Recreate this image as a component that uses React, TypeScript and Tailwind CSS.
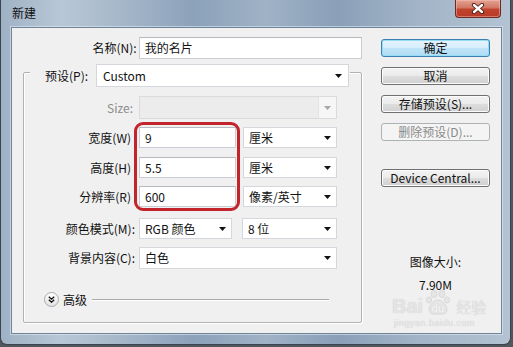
import React from "react";

function Arrow({ disabled }: { disabled?: boolean }) {
  return (
    <svg width="7" height="4" viewBox="0 0 7 4" className="shrink-0">
      <path d="M0 0H7L3.5 4Z" fill={disabled ? "#a8a8a8" : "#111"} />
    </svg>
  );
}

function Select({ className = "", text }: { className?: string; text: string }) {
  return (
    <div
      className={`flex items-center justify-between bg-white border border-[#d4d7db] pl-[5px] pr-[5px] ${className}`}
    >
      <span className="whitespace-nowrap">{text}</span>
      <Arrow />
    </div>
  );
}

function Input({ className = "", text }: { className?: string; text: string }) {
  return (
    <div
      className={`flex items-center bg-white border border-[#c9ced4] border-t-[#b5bac1] pl-[5px] ${className}`}
    >
      <span className="whitespace-nowrap">{text}</span>
    </div>
  );
}

function Label({ children, className = "" }: { children: React.ReactNode; className?: string }) {
  return (
    <div className={`w-[111px] shrink-0 flex justify-end whitespace-nowrap ${className}`}>{children}</div>
  );
}

function Btn({
  children,
  kind = "normal",
  className = "",
}: {
  children: React.ReactNode;
  kind?: "normal" | "default" | "disabled";
  className?: string;
}) {
  const styles = {
    normal:
      "border-[#707070] bg-[linear-gradient(#f3f3f3_0%,#ebebeb_48%,#dddddd_52%,#d0d0d0_100%)] text-[#111] shadow-[inset_0_0_0_1px_#fcfcfc]",
    default:
      "border-[#3c7fb1] bg-[linear-gradient(#e6f4fc_0%,#d6eefb_48%,#bfe4f8_52%,#b0dcf5_100%)] text-[#111] shadow-[inset_0_0_0_1px_#97dcf7]",
    disabled: "border-[#adb2b5] bg-[#f4f4f4] text-[#8a8a8a]",
  }[kind];
  return (
    <div
      className={`h-[18px] w-[109px] flex items-center justify-center rounded-[3px] border whitespace-nowrap ${styles} ${className}`}
    >
      {children}
    </div>
  );
}

export default function App() {
  return (
    <div className="w-[513px] h-[347px] bg-[#52575d] overflow-hidden font-['Noto_Sans_CJK_SC','Noto_Sans',sans-serif] text-[12px] leading-none text-[#111]">
      <div className="relative w-[511px] h-[345px] rounded-b-[7px] border border-t-0 border-[#3b4550] bg-[linear-gradient(90deg,#9fb2c5_0%,#b8c7d6_12%,#a3b5c8_25%,#8ca2ba_38%,#9fb2c6_52%,#8aa0b8_66%,#a2b4c7_82%,#b3c3d3_100%)] flex flex-col pl-[10px] pr-[8px]">
        {/* title bar */}
        <div className="h-[27px] shrink-0 flex items-start justify-between">
          <span className="mt-[7px] ml-[1px] text-[12px] text-[#111]">新建</span>
          <div className="w-[46px] h-[18px] mr-[1px] rounded-b-[4px] border border-t-0 border-[#6b2b22] bg-[linear-gradient(#e2a293_0%,#d27864_45%,#c0432c_55%,#b8392a_100%)] shadow-[inset_0_0_0_1px_rgba(255,200,190,0.45)] flex items-center justify-center">
            <svg width="14" height="11" viewBox="0 0 14 11">
              <path d="M3 2L11 9M11 2L3 9" stroke="#4a1a14" strokeWidth="4.2" strokeLinecap="round" />
              <path d="M3 2L11 9M11 2L3 9" stroke="#fff" strokeWidth="2.4" strokeLinecap="round" />
            </svg>
          </div>
        </div>

        {/* client area */}
        <div className="relative h-[307px] shrink-0 border border-[#6f8399] bg-[#f0f0f0] flex shadow-[0_0_0_1px_rgba(230,238,246,0.55)]">
          {/* left column */}
          <div className="w-[350px] shrink-0 flex flex-col">
            {/* name row */}
            <div className="mt-[9px] h-[22px] flex items-center">
              <div className="w-[125px] flex justify-end">名称(N):</div>
              <Input className="ml-[2px] w-[224px] h-[22px]" text="我的名片" />
            </div>

            {/* group box */}
            <div className="mt-[13px] ml-[11px] w-[339px] h-[251px] rounded-[2px] border border-[#b2b2b2] shadow-[inset_1px_1px_0_#fff,1px_1px_0_#fff] flex flex-col">
              {/* preset row on the border */}
              <div className="-mt-[9px] ml-[6px] w-[320px] h-[23px] bg-[#f0f0f0] flex items-center pl-[15px] pr-[1px]">
                <span>预设(P):</span>
                <Select className="ml-auto w-[253px] h-[23px] pl-[6px] pr-[6px]" text="Custom" />
              </div>

              {/* size */}
              <div className="mt-[9px] h-[23px] flex items-center">
                <Label className="text-[#8c8c8c] pr-[2px]">Size:</Label>
                <div className="ml-[4px] w-[198px] h-[23px] flex border border-[#d9dbde] bg-[#ececec]">
                  <div className="flex-1" />
                  <div className="w-[18px] flex items-center justify-center bg-[#f6f6f6] border-l border-[#e4e4e4]">
                    <Arrow disabled />
                  </div>
                </div>
              </div>

              {/* width */}
              <div className="mt-[8px] h-[21px] flex items-center">
                <Label className="pr-[4px]">宽度(W)</Label>
                <Input className="ml-[4px] w-[97px] h-[21px]" text="9" />
                <Select className="ml-[7px] w-[94px] h-[21px]" text="厘米" />
              </div>

              {/* height */}
              <div className="mt-[9px] h-[21px] flex items-center">
                <Label className="pr-[4px]">高度(H)</Label>
                <Input className="ml-[4px] w-[97px] h-[21px]" text="5.5" />
                <Select className="ml-[7px] w-[94px] h-[21px]" text="厘米" />
              </div>

              {/* resolution */}
              <div className="mt-[8px] h-[21px] flex items-center">
                <Label className="pr-[4px]">分辨率(R)</Label>
                <Input className="ml-[4px] w-[97px] h-[21px] border-[#7fa3c8] border-t-[#6b8fb8]" text="600" />
                <Select className="ml-[7px] w-[94px] h-[21px]" text="像素/英寸" />
              </div>

              {/* color mode */}
              <div className="mt-[11px] h-[21px] flex items-center">
                <Label>颜色模式(M):</Label>
                <Select className="ml-[4px] w-[93px] h-[21px]" text="RGB 颜色" />
                <Select className="ml-[10px] w-[95px] h-[21px]" text="8 位" />
              </div>

              {/* background */}
              <div className="mt-[8px] h-[22px] flex items-center">
                <Label>背景内容(C):</Label>
                <Select className="ml-[4px] w-[198px] h-[22px]" text="白色" />
              </div>

              {/* advanced */}
              <div className="mt-[23px] h-[15px] flex items-center pl-[20px] pr-[32px]">
                <div className="w-[15px] h-[15px] rounded-full border border-[#a9a9a9] bg-[linear-gradient(#ffffff,#e3e3e3)] flex items-center justify-center shrink-0">
                  <svg width="7" height="7" viewBox="0 0 7 7">
                    <path d="M0.8 0.8L3.5 3.2L6.2 0.8M0.8 3.8L3.5 6.2L6.2 3.8" stroke="#111" strokeWidth="1.3" fill="none" />
                  </svg>
                </div>
                <span className="ml-[4px]">高级</span>
                <div className="ml-[5px] flex-1 h-[2px] border-t border-[#a8a8a8] border-b border-b-[#ffffff]" />
              </div>
            </div>
          </div>

          {/* right column */}
          <div className="ml-[19px] w-[109px] flex flex-col items-center">
            <Btn kind="default" className="mt-[11px]">确定</Btn>
            <Btn className="mt-[10px]">取消</Btn>
            <Btn className="mt-[10px]">存储预设(S)...</Btn>
            <Btn kind="disabled" className="mt-[10px]">删除预设(D)...</Btn>
            <Btn className="mt-[28px]">Device Central...</Btn>
            <div className="mt-[69px] h-[12px]">图像大小:</div>
            <div className="mt-[11px] h-[12px]">7.90M</div>
          </div>

          {/* annotation: red rounded box */}
          <div className="absolute left-[122px] top-[94px] w-[106px] h-[89px] rounded-[9px] border-[3px] border-[#c3242c]" />

          {/* watermark */}
          <div className="absolute left-[380px] top-[262px] w-[110px] h-[44px] text-[#e4e4e4] [text-shadow:0_0_1px_#c9c9c9] pointer-events-none">
            <div className="flex items-end">
              <span className="text-[20px] font-bold leading-none font-['Liberation_Sans',sans-serif]">Bai</span>
              <div className="relative w-[28px] h-[26px] ml-[2px]">
                <svg width="28" height="26" viewBox="0 0 28 26" className="absolute left-0 top-0">
                  <g fill="#e6e6e6" stroke="#cdcdcd" strokeWidth="0.6">
                    <ellipse cx="9" cy="4" rx="3" ry="3.5" />
                    <ellipse cx="17" cy="4" rx="3" ry="3.5" />
                    <ellipse cx="4" cy="10" rx="2.6" ry="3" />
                    <ellipse cx="22" cy="10" rx="2.6" ry="3" />
                    <path d="M13 10C8 10 4 16 4 20C4 24 9 25 13 24C17 25 22 24 22 20C22 16 18 10 13 10Z" />
                  </g>
                </svg>
                <span className="absolute left-[6px] top-[13px] text-[11px] font-bold text-[#f2f2f2] font-['Liberation_Sans',sans-serif]">du</span>
              </div>
              <span className="ml-[3px] text-[15px] leading-none mb-[2px]">经验</span>
            </div>
            <div className="mt-[3px] ml-[2px] text-[9px] text-[#e6e6e6] font-['Liberation_Sans',sans-serif] tracking-[0.5px]">jingyan.baidu.com</div>
          </div>
        </div>
      </div>
    </div>
  );
}
